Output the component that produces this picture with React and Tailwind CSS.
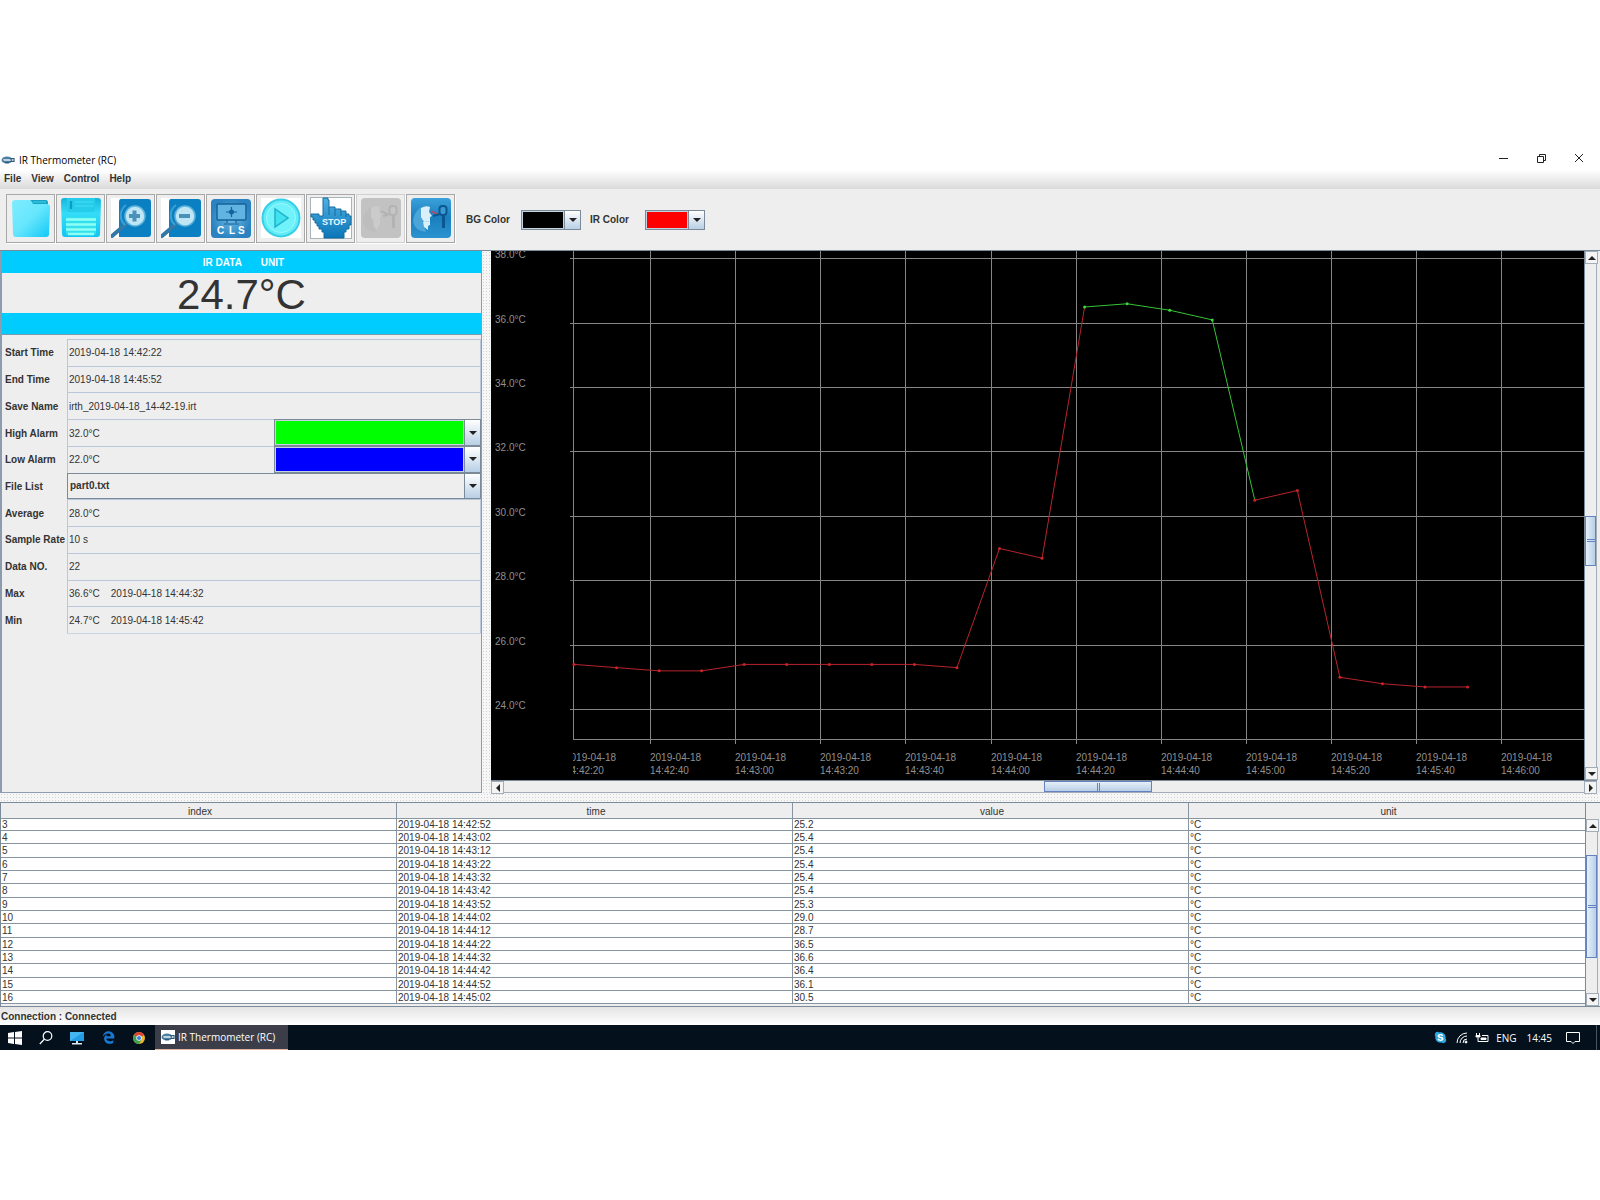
import { FaEdgeLegacy, FaSkype } from "react-icons/fa";

const samples = [
  25.4, 25.3, 25.2, 25.2, 25.4, 25.4, 25.4, 25.4, 25.4, 25.3, 29.0, 28.7, 36.5,
  36.6, 36.4, 36.1, 30.5, 30.8, 25.0, 24.8, 24.7, 24.7,
];

const rows = [
  [3, "2019-04-18 14:42:52", "25.2"],
  [4, "2019-04-18 14:43:02", "25.4"],
  [5, "2019-04-18 14:43:12", "25.4"],
  [6, "2019-04-18 14:43:22", "25.4"],
  [7, "2019-04-18 14:43:32", "25.4"],
  [8, "2019-04-18 14:43:42", "25.4"],
  [9, "2019-04-18 14:43:52", "25.3"],
  [10, "2019-04-18 14:44:02", "29.0"],
  [11, "2019-04-18 14:44:12", "28.7"],
  [12, "2019-04-18 14:44:22", "36.5"],
  [13, "2019-04-18 14:44:32", "36.6"],
  [14, "2019-04-18 14:44:42", "36.4"],
  [15, "2019-04-18 14:44:52", "36.1"],
  [16, "2019-04-18 14:45:02", "30.5"],
];

const times = [
  "14:42:20", "14:42:40", "14:43:00", "14:43:20", "14:43:40", "14:44:00",
  "14:44:20", "14:44:40", "14:45:00", "14:45:20", "14:45:40", "14:46:00",
];

/* ---------- Small drawings ---------- */

function AppIcon() {
  return (
    <svg viewBox="0 0 14 12" className="w-[14px] h-3">
      <ellipse cx="6" cy="6" rx="5.5" ry="3.6" fill="#4d7fa3" />
      <path d="M2 5.2h7l1 1.6H3z" fill="#e4eef4" />
      <path d="M9 4.500h4v3H9" stroke="#2d5a7b" strokeWidth="1.2" fill="none" />
      <path d="M4 8.600h4" stroke="#2d5a7b" strokeWidth="1.2" />
    </svg>
  );
}

function FolderIcon() {
  return (
    <svg viewBox="0 0 40 40" className="w-10 h-10">
      <defs>
        <linearGradient id="folder" x1="0" y1="0" x2="1" y2="1">
          <stop offset="0" stopColor="#7fecff" />
          <stop offset="0.5" stopColor="#66e6fd" />
          <stop offset="1" stopColor="#10c8f6" />
        </linearGradient>
      </defs>
      <path d="M19 2h16q2 0 2 3v4H22z" fill="#14a4c8" />
      <path d="M22 4h13" stroke="#4fcfe4" />
      <path d="M1 5q0-3 3-3h14q2 0 3 2l1 2h14q3 0 3 3l-1 27q0 3-3 3H5q-3 0-3-3z" fill="url(#folder)" />
    </svg>
  );
}

function SaveIcon() {
  return (
    <svg viewBox="0 0 40 40" className="w-10 h-10">
      <defs>
        <linearGradient id="save" x1="0" y1="0" x2="0" y2="1">
          <stop offset="0" stopColor="#16b5dc" />
          <stop offset="0.4" stopColor="#35dcf8" />
          <stop offset="1" stopColor="#12c4f2" />
        </linearGradient>
      </defs>
      <path d="M0 3q0-3 3-3h34q3 0 3 3l-1 33q0 3-3 3H4q-3 0-3-3z" fill="url(#save)" />
      <path d="M6 0h28v11q0 3-3 3H9q-3 0-3-3z" fill="#25cdeb" />
      <path d="M10 3v8" stroke="#0e9cc2" strokeWidth="2.4" />
      <path d="M14 4h18M14 8h18" stroke="#48dcf2" />
      <rect x="5" y="19" width="30" height="18" rx="2" fill="#35e0ee" />
      <path d="M5 21.5h30M5 26.5h30M5 31.5h30M7 36h26" stroke="#8dfff5" strokeWidth="2.4" />
    </svg>
  );
}

function ZoomIcon({ plus }) {
  return (
    <svg viewBox="0 0 40 40" className="w-10 h-10">
      <rect width="9" height="40" fill="#fff" />
      <path d="M10 1h27q3 0 3 3v32q0 3-3 3H8V4q0-3 2-3z" fill="#0a7fc1" />
      <path d="M1 38 15 26" stroke="#3279a8" strokeWidth="4" strokeLinecap="round" />
      <path d="M14 27a13 13 0 0 1 1-20" stroke="#3d9fd2" strokeWidth="2" fill="none" />
      <circle cx="24" cy="18" r="10" fill="#bfe6f4" stroke="#5eb5dd" strokeWidth="1.5" />
      <path d="M18 18h11" stroke="#4b92ba" strokeWidth="4" />
      {plus && <path d="M23.500 12.500v11" stroke="#4b92ba" strokeWidth="4" />}
    </svg>
  );
}

function ClearIcon() {
  return (
    <svg viewBox="0 0 40 40" className="w-10 h-10">
      <defs>
        <radialGradient id="clear">
          <stop offset="0" stopColor="#6ebbe5" />
          <stop offset="1" stopColor="#2a83c0" />
        </radialGradient>
      </defs>
      <rect y="1" width="40" height="39" rx="4" fill="url(#clear)" />
      <rect x="6" y="6" width="29" height="16" rx="1" fill="#61b3e1" stroke="#14639b" strokeWidth="1.5" />
      <path d="M15 14h11M20.500 9v10M16 22v3M25 22v3M13 26h15" stroke="#14639b" strokeWidth="1.2" />
      <circle cx="20.500" cy="14" r="2.500" fill="#14639b" />
      <g fill="#fff" fontSize="10" fontWeight="bold" fontFamily="Liberation Sans, sans-serif">
        <text x="6" y="36">C</text>
        <text x="18" y="36">L</text>
        <text x="27" y="36">S</text>
      </g>
    </svg>
  );
}

function PlayIcon() {
  return (
    <svg viewBox="0 0 40 40" className="w-10 h-10">
      <rect width="40" height="40" fill="#fff" />
      <circle cx="20" cy="20" r="18.500" fill="#62ecf8" stroke="#38cfe6" strokeWidth="2" />
      <circle cx="20" cy="20" r="14.500" fill="#70f2fb" stroke="#9bf9ff" />
      <path d="M14 11v18l13-9z" fill="#3fe2ee" stroke="#22b1cb" strokeWidth="1.5" />
    </svg>
  );
}

function StopIcon() {
  return (
    <svg viewBox="0 0 42 42" className="w-[42px] h-[42px]">
      <defs>
        <linearGradient id="hand" x1="0" y1="0" x2="0" y2="1">
          <stop offset="0" stopColor="#4fb0e2" />
          <stop offset="1" stopColor="#0b76b8" />
        </linearGradient>
      </defs>
      <rect x=".5" y=".5" width="41" height="41" fill="#fff" stroke="#a9b3ba" />
      <path
        d="M13 1h5v2h1v7h6v2h6v2h5v3h3v2h2v9h-2v4h-3v3h-2v6H14v-6h-2v-3H9v-3H7v-3H5v-3H3v-3H1v-3h8v2h4z"
        fill="url(#hand)" stroke="#186da0"
      />
      <path d="M19 10v8M25 12v7M31 14v5M36 17v3" stroke="#186da0" />
      <text x="12" y="28" fill="#eaf7ff" fontSize="9" fontWeight="bold" fontFamily="Liberation Sans, sans-serif">STOP</text>
    </svg>
  );
}

function HeadIcon({ off }) {
  const ink = off ? "#b3b3b3" : "#0c5790";
  const skin = off ? "#cbcbcb" : "#d9f0fb";
  return (
    <svg viewBox="0 0 40 40" className="w-10 h-10">
      <defs>
        <linearGradient id="head" x1="0" y1="0" x2="0" y2="1">
          <stop offset="0" stopColor="#3ba1da" />
          <stop offset="0.5" stopColor="#1a7fbe" />
          <stop offset="1" stopColor="#2b93d0" />
        </linearGradient>
      </defs>
      <rect width="40" height="40" rx="4" fill={off ? "#c2c2c2" : "url(#head)"} />
      <path d="M2 24q0-9 8-15l3 19 2 6q-11-1-13-10z" fill={off ? "#bdbdbd" : "#4ba5d8"} />
      <path d="M10 10q5-3 9-1l-1 5 3 4-2 1v4l-6 1-3-5z" fill={skin} />
      <path d="M12 24l7-1v4l-2 1v4l-4-3z" fill={skin} />
      <path d="M20 13l6 3" stroke={off ? "#b0b0b0" : "#c5415e"} strokeWidth="1.5" />
      <path d="M22 18l7-2" stroke={ink} strokeWidth="2" />
      <path d="M32.500 13v17" stroke={ink} strokeWidth="3" />
      <rect x="28.500" y="8" width="7" height="9" rx="3" fill={off ? "#c6c6c6" : "#3a9bd2"} stroke={ink} strokeWidth="2" />
    </svg>
  );
}

function ChromeIcon() {
  return (
    <svg viewBox="0 0 24 24" className="w-3 h-3">
      <circle cx="12" cy="12" r="12" fill="#e9b62c" />
      <path d="M12 12 1.600 6A12 12 0 0 1 22.400 6z" fill="#d94536" />
      <path d="M12 12 1.600 6A12 12 0 0 0 12 24l5-9z" fill="#3f9f55" />
      <circle cx="12" cy="12" r="5.500" fill="#fff" />
      <circle cx="12" cy="12" r="4.200" fill="#3e7fd8" />
    </svg>
  );
}

/* ---------- Swing style widgets ---------- */

function Arrow({ dir }) {
  const shapes = {
    up: "M0 6 4 2 8 6z",
    down: "M0 2h8L4 6z",
    left: "M6 0v8L2 4z",
    right: "M2 0v8l4-4z",
  };
  return (
    <svg viewBox="0 0 8 8" className="w-2 h-2 fill-[#222]">
      <path d={shapes[dir]} />
    </svg>
  );
}

function ComboArrow() {
  return (
    <span className="w-4 shrink-0 flex items-center justify-center border-l border-[#7a8a99] bg-linear-to-b from-white to-[#b8cfe5] pointer-events-none">
      <Arrow dir="down" />
    </span>
  );
}

function ColorSelect({ id, color, className }) {
  return (
    <div className={`flex border border-[#7a8a99] ${className}`}>
      <select
        id={id}
        aria-label={id}
        className={`flex-1 min-w-0 appearance-none border border-[#c5d3e2] ${color}`}
      >
        <option value={id}></option>
      </select>
      <ComboArrow />
    </div>
  );
}

function ScrollButton({ dir }) {
  return (
    <button aria-label={dir} className="w-[13px] h-[13px] shrink-0 flex items-center justify-center border border-[#a3adb8] bg-[#f4f4f4]">
      <Arrow dir={dir} />
    </button>
  );
}

function VScroll({ start, size }) {
  return (
    <div className="w-[13px] shrink-0 flex flex-col bg-[#eeeeee] border-l border-[#7a8a99]">
      <ScrollButton dir="up" />
      <div className="flex-1 border-r border-[#a3adb8]">
        <div style={{ height: `${start}%` }} />
        <div
          className="flex flex-col items-center justify-center gap-px border border-[#6382bf] bg-linear-to-r from-[#e6f0fa] to-[#b8cfe5]"
          style={{ height: `${size}%` }}
        >
          <i className="w-2 h-px bg-[#6382bf]" />
          <i className="w-2 h-px bg-[#6382bf]" />
        </div>
      </div>
      <ScrollButton dir="down" />
    </div>
  );
}

function HScroll({ start, size }) {
  return (
    <div className="h-[13px] flex bg-[#eeeeee] border-t border-[#7a8a99]">
      <ScrollButton dir="left" />
      <div className="flex-1 flex border-b border-[#a3adb8]">
        <div style={{ width: `${start}%` }} />
        <div
          className="flex items-center justify-center gap-px border border-[#6382bf] bg-linear-to-b from-[#e6f0fa] to-[#b8cfe5]"
          style={{ width: `${size}%` }}
        >
          <i className="w-px h-2 bg-[#6382bf]" />
          <i className="w-px h-2 bg-[#6382bf]" />
        </div>
      </div>
      <ScrollButton dir="right" />
    </div>
  );
}

function ToolButton({ label, disabled, children }) {
  return (
    <button
      aria-label={label}
      disabled={disabled}
      className="w-[49px] h-[49px] flex items-center justify-center border border-[#a8a8a8] disabled:border-[#d0d0d0] shadow-[1px_1px_0_#fff]"
    >
      {children}
    </button>
  );
}

function Field({ label, value }) {
  const id = label.toLowerCase().replaceAll(" ", "-");
  return (
    <>
      <label htmlFor={id} className="flex items-center pl-[3px] pt-0.5 font-bold whitespace-nowrap">{label}</label>
      <input
        id={id}
        readOnly
        defaultValue={value}
        className="col-span-2 min-w-0 border-t border-l border-r border-[#b8c8da] px-px pt-px"
      />
    </>
  );
}

function AlarmField({ label, value, color }) {
  const id = label.toLowerCase().replaceAll(" ", "-");
  return (
    <>
      <label htmlFor={id} className="flex items-center pl-[3px] pt-0.5 font-bold whitespace-nowrap">{label}</label>
      <input id={id} readOnly defaultValue={value} className="min-w-0 border-t border-l border-[#b8c8da] px-px pt-px" />
      <ColorSelect id={`${label} Color`} color={color} className="min-w-0" />
    </>
  );
}

/* ---------- Chart ---------- */

function Chart() {
  const tickX = (i) => Math.round(74 + i * 85.1) + 0.5;
  const lineY = (v) => Math.round(458 - (v - 24) * 32.2) + 0.5;
  const points = samples.map((v, i) => [83 + i * 42.55, 458.5 - (v - 24) * 32.2]);

  return (
    <svg className="block w-full h-full bg-black" fontFamily="Liberation Sans, Arial, sans-serif" fontSize="10">
      <defs>
        <clipPath id="plot">
          <rect x="82" y="0" width="100%" height="100%" />
        </clipPath>
      </defs>
      <g stroke="#858585">
        {[24, 26, 28, 30, 32, 34, 36, 38].map((v) => (
          <line key={v} x1="79" x2="100%" y1={lineY(v)} y2={lineY(v)} />
        ))}
        <line x1="82" x2="100%" y1="488.5" y2="488.5" />
        <line x1="82.5" x2="82.5" y1="0" y2="489" />
        {times.slice(1).map((t, i) => (
          <line key={t} x1={tickX(i + 1)} x2={tickX(i + 1)} y1="0" y2="493" />
        ))}
      </g>
      <g fill="#909090">
        {[24, 26, 28, 30, 32, 34, 36, 38].map((v) => (
          <text key={v} x="4" y={lineY(v) - 0.5}>{v}.0°C</text>
        ))}
      </g>
      <g fill="#909090" clipPath="url(#plot)">
        {times.map((t, i) => (
          <g key={t}>
            <text x={tickX(i) - 0.5} y="510">2019-04-18</text>
            <text x={tickX(i) - 0.5} y="523">{t}</text>
          </g>
        ))}
      </g>
      {points.slice(1).map(([x, y], i) => (
        <line
          key={i}
          x1={points[i][0]} y1={points[i][1]} x2={x} y2={y}
          stroke={i >= 12 && i < 16 ? "#35c435" : "#b8242c"}
        />
      ))}
      {points.map(([x, y], i) => (
        <circle key={i} cx={x} cy={y} r="1.500" fill={i >= 12 && i < 16 ? "#3bd63b" : "#cc2229"} />
      ))}
    </svg>
  );
}

/* ---------- Page ---------- */

export default function App() {
  return (
    <div className="min-h-screen bg-white pt-[150px] font-['Liberation_Sans',Arial,sans-serif] text-[10px] leading-3 text-[#333]">
      {/* Title bar */}
      <header className="h-5 flex items-center pl-px font-['Open_Sans',sans-serif] text-black">
        <AppIcon />
        <h1 className="pl-1">IR Thermometer (RC)</h1>
        <div className="ml-auto flex gap-[14px] pr-[9px] pb-1">
          <button aria-label="Minimize" className="w-6 flex justify-center">
            <svg viewBox="0 0 10 10" className="w-[10px] h-[10px] stroke-[#222] fill-none"><path d="M1 5.500h9" /></svg>
          </button>
          <button aria-label="Restore" className="w-6 flex justify-center">
            <svg viewBox="0 0 10 10" className="w-[10px] h-[10px] stroke-[#222] fill-none"><path d="M1.500 3.500h6v6h-6zM3.500 3V1.500h6v6H8" /></svg>
          </button>
          <button aria-label="Close" className="w-6 flex justify-center">
            <svg viewBox="0 0 10 10" className="w-[10px] h-[10px] stroke-[#222] fill-none"><path d="m1 1 8 8M9 1 1 9" /></svg>
          </button>
        </div>
      </header>

      {/* Menu */}
      <nav className="h-[19px] flex items-center gap-[10px] pl-1 pb-0.5 font-bold bg-linear-to-b from-white to-[#dadada]">
        <button>File</button>
        <button>View</button>
        <button>Control</button>
        <button>Help</button>
      </nav>

      {/* Toolbar */}
      <div className="h-[61px] flex items-center pl-[6px] bg-[#eeeeee]">
        <div className="flex gap-px pb-[3px]">
          <ToolButton label="Open"><FolderIcon /></ToolButton>
          <ToolButton label="Save"><SaveIcon /></ToolButton>
          <ToolButton label="Zoom in"><ZoomIcon plus /></ToolButton>
          <ToolButton label="Zoom out"><ZoomIcon /></ToolButton>
          <ToolButton label="Clear"><ClearIcon /></ToolButton>
          <ToolButton label="Play"><PlayIcon /></ToolButton>
          <ToolButton label="Stop"><StopIcon /></ToolButton>
          <ToolButton label="Connect" disabled><HeadIcon off /></ToolButton>
          <ToolButton label="Disconnect"><HeadIcon /></ToolButton>
        </div>
        <label htmlFor="BG Color" className="w-[55px] ml-[11px] font-bold">BG Color</label>
        <ColorSelect id="BG Color" color="bg-black" className="w-[60px] h-5" />
        <label htmlFor="IR Color" className="w-[55px] ml-[9px] font-bold">IR Color</label>
        <ColorSelect id="IR Color" color="bg-[#ff0000]" className="w-[60px] h-5" />
      </div>

      {/* Readings and chart */}
      <main className="h-[543px] flex border-t border-[#7a8a99] bg-[#eeeeee]">
        <section className="w-[482px] shrink-0 border-l-2 border-r border-b border-[#8c9cac]">
          <div className="h-[22px] flex items-center justify-center gap-[19px] pt-0.5 pl-1 bg-[#00ccff] font-bold text-white">
            <span>IR DATA</span>
            <span>UNIT</span>
          </div>
          <p className="h-10 pt-px text-center text-[42px] leading-[42px]">24.7°C</p>
          <div className="h-[22px] bg-[#00ccff] border-b border-[#7a9cb0]" />
          <form className="mt-1 h-[294px] grid grid-cols-[65px_207px_1fr] auto-rows-fr">
            <Field label="Start Time" value="2019-04-18 14:42:22" />
            <Field label="End Time" value="2019-04-18 14:45:52" />
            <Field label="Save Name" value="irth_2019-04-18_14-42-19.irt" />
            <AlarmField label="High Alarm" value="32.0°C" color="bg-[#00ff00]" />
            <AlarmField label="Low Alarm" value="22.0°C" color="bg-[#0000ff]" />
            <label htmlFor="files" className="flex items-center pl-[3px] pt-0.5 font-bold">File List</label>
            <div className="col-span-2 flex border border-[#7a8a99]">
              <select id="files" className="flex-1 appearance-none px-0.5 font-bold">
                <option>part0.txt</option>
              </select>
              <ComboArrow />
            </div>
            <Field label="Average" value="28.0°C" />
            <Field label="Sample Rate" value="10 s" />
            <Field label="Data NO." value="22" />
            <Field label="Max" value={"36.6°C\u00a0\u00a0\u00a0 2019-04-18 14:44:32"} />
            <Field label="Min" value={"24.7°C\u00a0\u00a0\u00a0 2019-04-18 14:45:42"} />
          </form>
          <div className="ml-[65px] border-t border-[#c8d6e4]" />
        </section>

        <div className="w-[9px] shrink-0 bg-[#f6f6f6] bg-[radial-gradient(#d2d2d2_1px,transparent_1px)] bg-[size:3px_3px]" />

        <section className="flex-1 min-w-0 flex flex-col mr-[3px]">
          <div className="flex-1 min-h-0 flex">
            <div className="flex-1 min-w-0"><Chart /></div>
            <VScroll start={50} size={10} />
          </div>
          <HScroll start={50} size={10} />
        </section>
      </main>

      <div className="h-[9px] bg-[#f6f6f6] bg-[radial-gradient(#d2d2d2_1px,transparent_1px)] bg-[size:3px_3px]" />

      {/* Samples */}
      <section className="flex border-y border-[#7a8a99] bg-[#eeeeee] pr-[2px]">
        <div className="flex-1 border-l border-[#7a8a99] pb-0.5">
          <table className="w-full table-fixed border-separate border-spacing-0">
            <thead>
              <tr className="h-4">
                {["index", "time", "value", "unit"].map((h) => (
                  <th key={h} className="p-0 pt-[3px] pl-[3px] font-normal border-b border-r last:border-r-0 border-[#8795a3]">{h}</th>
                ))}
              </tr>
            </thead>
            <tbody className="bg-white leading-[11px]">
              {rows.map(([index, time, value]) => (
                <tr key={index} className="h-[13px] first:h-3 nth-[3n]:h-[14px]">
                  <td className="p-0 pl-px border-b border-r border-[#8795a3]">{index}</td>
                  <td className="p-0 pl-px border-b border-r border-[#8795a3]">{time}</td>
                  <td className="p-0 pl-px border-b border-r border-[#8795a3]">{value}</td>
                  <td className="p-0 pl-px border-b border-[#8795a3]">°C</td>
                </tr>
              ))}
            </tbody>
          </table>
        </div>
        <div className="flex flex-col">
          <div className="h-4 border-l border-[#7a8a99]" />
          <div className="flex-1 flex"><VScroll start={14} size={64} /></div>
        </div>
      </section>

      <p className="h-[18px] flex items-center pl-px pt-px font-bold bg-linear-to-b from-[#e4e4e4] to-white">Connection : Connected</p>

      {/* Taskbar */}
      <footer className="h-[25px] flex items-center bg-[#04111d] font-['Open_Sans',sans-serif] text-white">
        <button aria-label="Start" className="w-[30px] flex justify-center">
          <svg viewBox="0 0 14 14" className="w-[14px] h-[14px] fill-white"><path d="M0 2l6-1v5.500H0zM7 .9 14 0v6.500H7zM0 7.500h6V13l-6-1zM7 7.500h7V14l-7-1z" /></svg>
        </button>
        <button aria-label="Search" className="w-[31px] flex justify-center">
          <svg viewBox="0 0 14 14" className="w-[14px] h-[14px] stroke-white fill-none" strokeWidth="1.2"><circle cx="8.500" cy="5" r="4.300" /><path d="M5.500 8 .8 13" /></svg>
        </button>
        <button aria-label="Computer" className="w-8 flex justify-center">
          <svg viewBox="0 0 14 14" className="w-[14px] h-[14px]"><path d="M0 1h14v9H0z" fill="#45b5f0" /><path d="M0 10 14 1v9z" fill="#219de4" /><path d="M6 10h2v2H6zM2 12h10v1.500H2z" fill="#dbeaf2" /></svg>
        </button>
        <button aria-label="Edge" className="w-[30px] flex justify-center">
          <FaEdgeLegacy className="w-[13px] h-[13px] text-[#1879d2]" />
        </button>
        <button aria-label="Chrome" className="w-8 flex justify-center">
          <ChromeIcon />
        </button>
        <button className="w-[133px] h-full flex items-center gap-[3px] pl-[6px] bg-[#3b3e48] border-b border-[#e2b9a0]">
          <span className="w-[14px] h-[14px] flex items-center bg-white"><AppIcon /></span>
          IR Thermometer (RC)
        </button>
        <div className="ml-auto flex items-center h-full">
          <FaSkype className="w-[13px] h-[13px] text-[#2ba9dd] bg-[radial-gradient(white_50%,transparent_50%)]" />
          <svg viewBox="0 0 12 12" className="w-3 h-3 ml-[9px] stroke-white fill-none">
            <path d="M1 11A10 10 0 0 1 11 1M4 11a7 7 0 0 1 7-7M7 11a4 4 0 0 1 4-4" />
            <circle cx="10" cy="10" r="1" fill="#fff" />
          </svg>
          <svg viewBox="0 0 14 12" className="w-[14px] h-3 ml-[7px] stroke-white fill-none">
            <path d="M1.500 1v2M4.500 1v2M3 5.500v4h10v-6H7" />
            <path d="M1 3.500h4v1.500H1z" fill="#fff" />
            <path d="M6 6h5v1.500H6z" fill="#fff" />
          </svg>
          <span className="ml-[7px]">ENG</span>
          <span className="ml-[10px]">14:45</span>
          <button aria-label="Notifications" className="ml-[14px] mr-[16px]">
            <svg viewBox="0 0 14 14" className="w-[14px] h-[14px] stroke-white fill-none"><path d="M.5 1.500h13v9H9l-2 2-2-2H.5z" /></svg>
          </button>
          <i className="w-1 h-full border-l border-[#4a545e]" />
        </div>
      </footer>
    </div>
  );
}
